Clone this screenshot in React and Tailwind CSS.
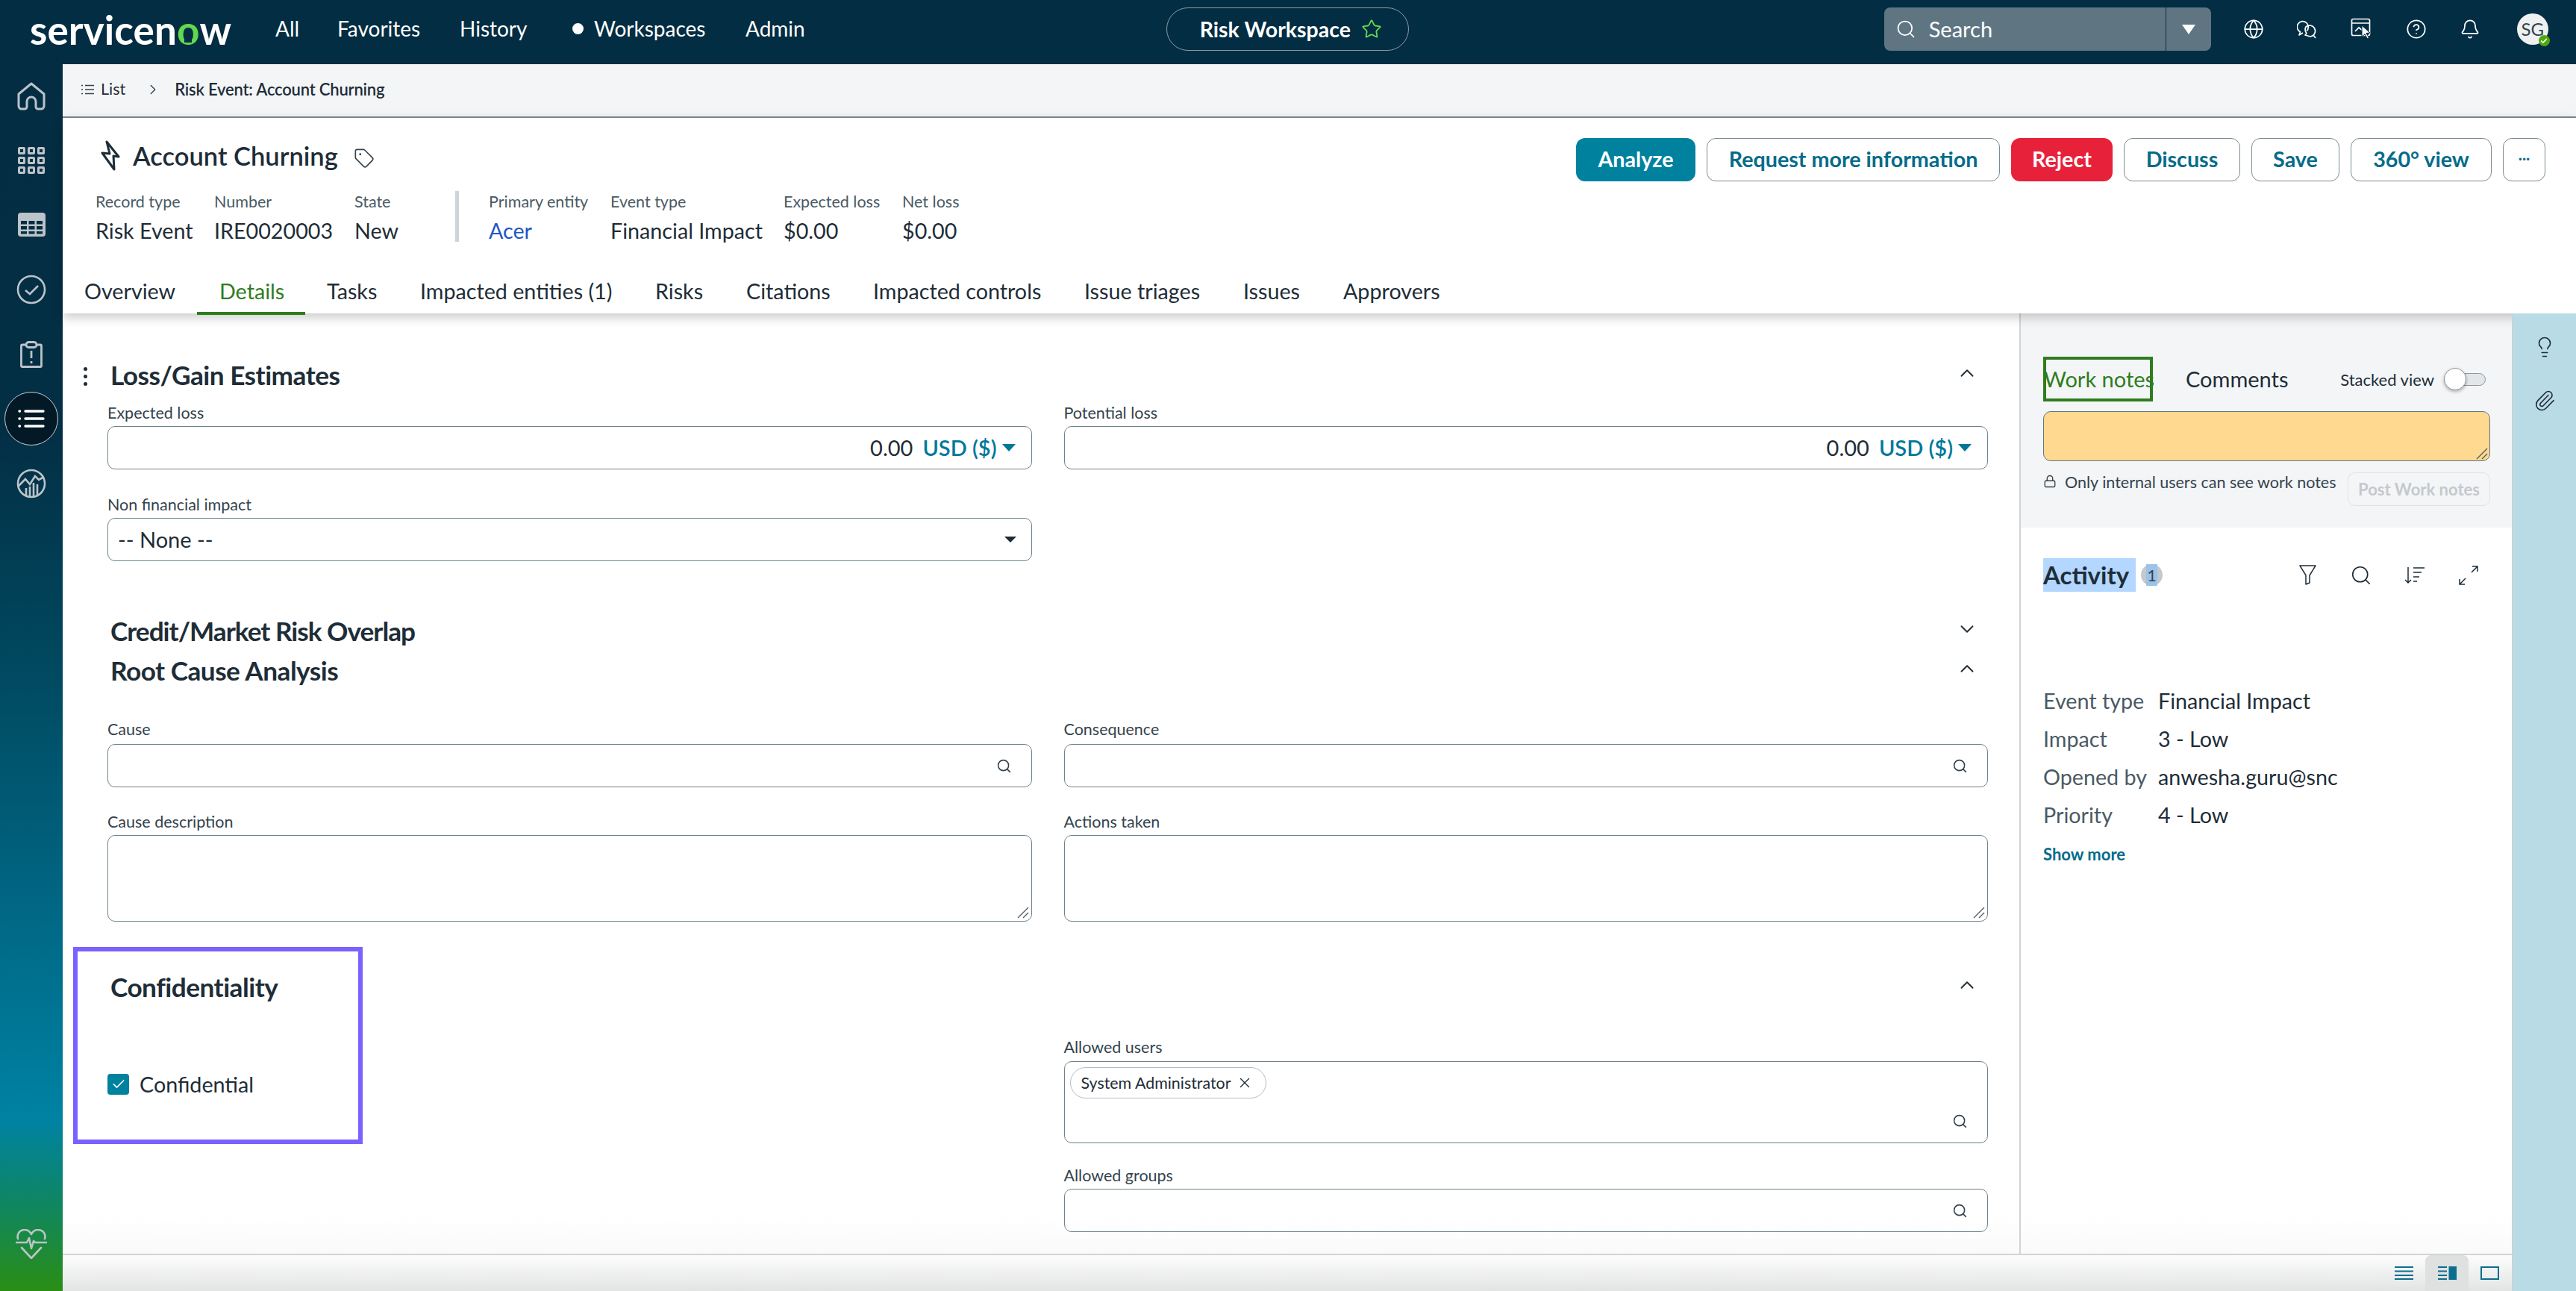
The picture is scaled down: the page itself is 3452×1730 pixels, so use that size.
import {
  Bell, ChevronDown, ChevronRight, ChevronUp, CircleHelp, Globe, Lightbulb, Lock, Paperclip,
  Search, Star, Tag, X, Check,
} from 'lucide-react'

const font = { fontFamily: '"Lato", "Noto Sans", sans-serif' }

function HomeIcon() {
  return (
    <svg width="40" height="38" viewBox="0 0 40 38" fill="none" stroke="#bcc3c9" strokeWidth="3" strokeLinejoin="round">
      <path d="M3 16 20 2l17 14v16a4 4 0 0 1-4 4h-4a3 3 0 0 1-3-3v-7a6 6 0 0 0-12 0v7a3 3 0 0 1-3 3H7a4 4 0 0 1-4-4Z" />
    </svg>
  )
}

function AppsIcon() {
  const cells = [0, 1, 2, 3, 4, 5, 6, 7, 8]
  return (
    <div className="grid w-[36px] grid-cols-3 gap-[3px]">
      {cells.map((c) => (
        <div key={c} className="h-[10px] rounded-[2px] border-[3px] border-[#bcc3c9]" />
      ))}
    </div>
  )
}

function TableIcon() {
  return (
    <svg width="37" height="32" viewBox="0 0 37 32">
      <rect width="37" height="32" rx="4" fill="#bcc3c9" />
      <g fill="#032d42">
        <rect x="4" y="11" width="8" height="4.5" /><rect x="14.5" y="11" width="8" height="4.5" /><rect x="25" y="11" width="8" height="4.5" />
        <rect x="4" y="18" width="8" height="4.5" /><rect x="14.5" y="18" width="8" height="4.5" /><rect x="25" y="18" width="8" height="4.5" />
        <rect x="4" y="25" width="8" height="3.5" /><rect x="14.5" y="25" width="8" height="3.5" /><rect x="25" y="25" width="8" height="3.5" />
      </g>
    </svg>
  )
}

function CheckCircleIcon() {
  return (
    <svg width="40" height="40" viewBox="0 0 40 40" fill="none" stroke="#bcc3c9" strokeWidth="2.6">
      <circle cx="20" cy="20" r="18" />
      <path d="m12 21 6 5 11-11" />
    </svg>
  )
}

function ClipboardIcon() {
  return (
    <svg width="30" height="36" viewBox="0 0 30 36" fill="none" stroke="#bcc3c9" strokeWidth="2.8" strokeLinejoin="round">
      <path d="M8 5H3a1.500 1.500 0 0 0-1.500 1.500V33A1.500 1.500 0 0 0 3 34.500h24a1.500 1.500 0 0 0 1.500-1.500V6.500A1.500 1.500 0 0 0 27 5h-5" />
      <rect x="8" y="1.500" width="14" height="7" rx="3.500" />
      <path d="M15 13v10M15 27v3" />
    </svg>
  )
}

function ListIcon() {
  return (
    <svg width="36" height="28" viewBox="0 0 36 28" fill="none" stroke="#fff" strokeWidth="3.400" strokeLinecap="round">
      <path d="M10 4h24M10 14h24M10 24h24" />
      <path d="M2 4h.500M2 14h.500M2 24h.500" />
    </svg>
  )
}

function ChartIcon() {
  return (
    <svg width="40" height="40" viewBox="0 0 40 40" fill="none" stroke="#bcc3c9" strokeWidth="2.600">
      <circle cx="20" cy="20" r="18" />
      <path d="M3 23 12 14l6 7 7-11 5 5 7-4" />
      <path d="M13 36V26M18 38V24M23 38V19M28 36V21" />
    </svg>
  )
}

function HeartIcon() {
  return (
    <svg width="42" height="40" viewBox="0 0 42 40" fill="none" stroke="#bcc3c9" strokeWidth="2.600" strokeLinecap="round" strokeLinejoin="round">
      <path d="M3 13C1 6 6 1 12 1c4 0 7 2 9 6 2-4 5-6 9-6 6 0 11 5 9 12" />
      <path d="M1 18h14l3-6 3 14 3-10 2 2h15" />
      <path d="m8 25 13 14 13-14" />
    </svg>
  )
}

function Bolt() {
  return (
    <svg width="27" height="42" viewBox="11 11 27 42" fill="none" stroke="#1e2d37" strokeWidth="3" strokeLinejoin="round">
      <path d="M19 13 35 33 28 32 29 50 13 28 23 29Z" />
    </svg>
  )
}

function SelectIcon() {
  return <div className="h-0 w-0 border-x-[9px] border-t-[10px] border-x-transparent border-t-[#00789a]" />
}

function ChatIcon() {
  return (
    <svg width="28" height="26" viewBox="0 0 28 26" fill="none" stroke="#fff" strokeWidth="1.700" strokeLinejoin="round">
      <path d="M13 15.500a7.500 7.500 0 1 0-8.500 1.300L3 21l5-3" />
      <path d="M12 10a7.500 7.500 0 1 1 6 13l-7-2 2-2.500A7.500 7.500 0 0 1 12 10Z" />
      <path d="m22 21 3 4" />
    </svg>
  )
}

function CursorIcon() {
  return (
    <svg width="30" height="30" viewBox="0 0 30 30" fill="none" stroke="#fff" strokeWidth="1.700">
      <rect x="1.500" y="1.500" width="24" height="22" rx="2" />
      <path d="M1.500 7h24M6 18l5-5 5 4" />
      <path d="m15 10 11 10-5 .5 3.500 6-2.200 1.300-3.300-6-4 3.500Z" fill="#fff" stroke="#032d42" strokeWidth="1" />
    </svg>
  )
}

function FilterIcon() {
  return (
    <svg width="23" height="27" viewBox="0 0 23 27" fill="none" stroke="#1e2d37" strokeWidth="1.500" strokeLinejoin="round">
      <path d="M1 1h21l-8 13v10l-5 2V14Z" />
    </svg>
  )
}

function SortIcon() {
  return (
    <svg width="28" height="24" viewBox="0 0 28 24" fill="none" stroke="#1e2d37" strokeWidth="1.500">
      <path d="M5 1v21M1 18l4 4 4-4" />
      <path d="M12 2h15M12 8h11M12 14h8M12 20h5" />
    </svg>
  )
}

function ExpandIcon() {
  return (
    <svg width="28" height="28" viewBox="0 0 28 28" fill="none" stroke="#1e2d37" strokeWidth="1.500">
      <path d="m18 10 8-8M19 2h7v7" />
      <path d="m10 18-8 8M2 19v7h7" />
    </svg>
  )
}

function Label({ children, className = '' }) {
  return <div className={`h-[26px] text-[21.5px] leading-[26px] text-[#33434d] ${className}`}>{children}</div>
}

function Heading({ children, open = true, className = '' }) {
  return (
    <div className={`flex h-[40px] items-center justify-between pl-[4px] pr-[13px] ${className}`}>
      <h2 className="text-[35.200px] font-bold leading-[40px] tracking-[-0.5px] text-[#1e2d37]">{children}</h2>
      {open
        ? <ChevronUp size={30} strokeWidth={1.500} className="mt-[-5px] text-[#1e2d37]" />
        : <ChevronDown size={30} strokeWidth={1.500} className="mt-[-5px] text-[#1e2d37]" />}
    </div>
  )
}

function SearchBox() {
  return (
    <div className="flex h-[58px] items-center justify-end rounded-[10px] border-[1.500px] border-[#6f818b] pr-[26px]">
      <Search size={21} strokeWidth={1.800} className="text-[#33434d]" />
    </div>
  )
}

function TextBox() {
  return (
    <div className="relative h-[116px] rounded-[10px] border-[1.500px] border-[#6f818b]">
      <svg width="16" height="16" viewBox="0 0 16 16" className="absolute bottom-[3px] right-[3px]" stroke="#4b5b65" strokeWidth="1.300">
        <path d="M15 1 1 15M15 8l-7 7" />
      </svg>
    </div>
  )
}

function MoneyBox() {
  return (
    <div className="flex h-[58px] items-center justify-end rounded-[10px] border-[1.500px] border-[#6f818b] pr-[21px] text-[29px]">
      <span className="text-[#1e2d37]">0.00</span>
      <span className="ml-[13px] font-semibold text-[#00789a]">USD ($)</span>
      <div className="ml-[7px]"><SelectIcon /></div>
    </div>
  )
}

function OutlineButton({ children, className = '' }) {
  return (
    <button className={`flex h-[58px] items-center justify-center rounded-[12px] border-[1.500px] border-[#7b8a93] bg-white text-[28.700px] font-bold text-[#046b8a] ${className}`}>
      {children}
    </button>
  )
}

function Meta({ label, value, link = false, className = '' }) {
  return (
    <div className={className}>
      <div className="h-[28px] text-[21.500px] leading-[28px] text-[#4a5a64]">{label}</div>
      <div className={`mt-[7px] h-[36px] whitespace-nowrap text-[28.700px] leading-[36px] ${link ? 'text-[#1e56c4]' : 'text-[#1e2d37]'}`}>{value}</div>
    </div>
  )
}

const tabs = [
  ['Overview', 'w-[181px]'],
  ['Details', 'w-[144px]'],
  ['Tasks', 'w-[125px]'],
  ['Impacted entities (1)', 'w-[315px]'],
  ['Risks', 'w-[122px]'],
  ['Citations', 'w-[170px]'],
  ['Impacted controls', 'w-[283px]'],
  ['Issue triages', 'w-[213px]'],
  ['Issues', 'w-[134px]'],
  ['Approvers', 'w-[130px]'],
]

const activity = [
  ['Event type', 'Financial Impact'],
  ['Impact', '3 - Low'],
  ['Opened by', 'anwesha.guru@snc'],
  ['Priority', '4 - Low'],
]

export default function App() {
  return (
    <div style={font} className="flex h-[1730px] w-[3452px] flex-col overflow-hidden bg-white">
      {/* top bar */}
      <header className="flex h-[86px] shrink-0 items-center bg-[#032d42] pb-[8px] text-white">
        <div className="ml-[40px] w-[329px] whitespace-nowrap text-[53px] font-bold leading-none tracking-[0.1px]">
          servicen
          <span className="relative inline-block text-[#62d84e]">
            o
            <span className="absolute bottom-[9px] left-1/2 h-[9px] w-[10px] -translate-x-1/2 rounded-t-full bg-[#032d42]" />
          </span>
          w
        </div>
        <nav className="mb-[2px] flex items-center text-[28px]">
          <span className="w-[83px]">All</span>
          <span className="w-[164px]">Favorites</span>
          <span className="w-[151px]">History</span>
          <span className="mr-[14px] h-[15px] w-[15px] rounded-full bg-white" />
          <span className="w-[203px]">Workspaces</span>
          <span>Admin</span>
        </nav>
        <div className="ml-[484px] flex h-[58px] w-[325px] items-center rounded-full border-[1.500px] border-[#8c9ca5] pl-[44px]">
          <span className="text-[28.500px] font-bold">Risk Workspace</span>
          <Star size={28} strokeWidth={1.600} className="ml-[14px] text-[#62d84e]" />
        </div>
        <div className="ml-[637px] flex h-[58px] w-[438px] items-center rounded-[8px] bg-[#5f7682]">
          <Search size={28} strokeWidth={1.500} className="ml-[15px]" />
          <span className="ml-[17px] flex-1 text-[29px]">Search</span>
          <div className="flex h-full w-[61px] items-center justify-center border-l-[1.500px] border-[#032d42]">
            <div className="h-0 w-0 border-x-[9px] border-t-[13px] border-x-transparent border-t-white" />
          </div>
        </div>
        <div className="ml-[43px] flex items-center gap-[44px]">
          <Globe size={28} strokeWidth={1.500} />
          <ChatIcon />
          <CursorIcon />
          <CircleHelp size={28} strokeWidth={1.500} />
          <Bell size={28} strokeWidth={1.500} />
        </div>
        <div className="relative ml-[49px] flex h-[42px] w-[42px] items-center justify-center rounded-full bg-[#eef0f1] text-[24px] text-[#33434d]">
          SG
          <div className="absolute bottom-[-2px] right-[-2px] flex h-[15px] w-[15px] items-center justify-center rounded-full bg-[#4fa80f]">
            <Check size={10} strokeWidth={4} className="text-white" />
          </div>
        </div>
      </header>

      <div className="flex min-h-0 flex-1">
        {/* left rail */}
        <aside className="flex w-[84px] shrink-0 flex-col items-center bg-[linear-gradient(180deg,#032d42_0%,#032f45_30%,#004a61_50%,#006c8a_72%,#0082a3_86%,#0f8660_93%,#2a8e14_100%)]">
          <div className="flex h-[85px] items-center justify-center"><HomeIcon /></div>
          <div className="flex h-[87px] items-center justify-center"><AppsIcon /></div>
          <div className="flex h-[86px] items-center justify-center"><TableIcon /></div>
          <div className="flex h-[87px] items-center justify-center"><CheckCircleIcon /></div>
          <div className="flex h-[87px] items-center justify-center"><ClipboardIcon /></div>
          <div className="flex h-[86px] items-center justify-center">
            <div className="flex h-[72px] w-[72px] items-center justify-center rounded-full border-[1.500px] border-[#c7d0d5] bg-[#031a26]">
              <ListIcon />
            </div>
          </div>
          <div className="flex h-[87px] items-center justify-center"><ChartIcon /></div>
          <div className="mb-[43px] mt-auto"><HeartIcon /></div>
        </aside>

        <main className="flex min-w-0 flex-1 flex-col">
          {/* breadcrumb */}
          <div className="flex h-[72px] shrink-0 items-center border-b-2 border-[#7d8a93] bg-[#f4f5f7] pb-[3px] pl-[25px] text-[#1e2d37]">
            <svg width="17" height="14" viewBox="0 0 17 14" stroke="#33434d" strokeWidth="1.600" fill="none">
              <path d="M5 1.500h12M5 7h12M5 12.500h12M0 1.500h2M0 7h2M0 12.500h2" />
            </svg>
            <span className="ml-[9px] text-[21.500px]">List</span>
            <ChevronRight size={22} strokeWidth={1.500} className="ml-[26px] text-[#33434d]" />
            <span className="ml-[18px] text-[22px] font-semibold tracking-[-0.2px]">Risk Event: Account Churning</span>
          </div>

          {/* record header */}
          <div className="relative z-10 h-[262px] shrink-0 bg-white shadow-[0_5px_14px_rgba(0,0,0,0.22)]">
            <div className="flex h-[98px] items-start justify-between pr-[41px] pt-[27px]">
              <div className="flex items-center pl-[51px] pt-[2px]">
                <Bolt />
                <h1 className="ml-[16px] text-[34.500px] font-semibold leading-[44px] text-[#1e2d37]">Account Churning</h1>
                <Tag size={28} strokeWidth={1.400} className="ml-[21px] mt-[6px] text-[#33434d]" />
              </div>
              <div className="flex gap-[15px]">
                <button className="h-[58px] w-[160px] rounded-[12px] bg-[#00829f] text-[28.700px] font-bold text-white">Analyze</button>
                <OutlineButton className="w-[393px]">Request more information</OutlineButton>
                <button className="h-[58px] w-[136px] rounded-[12px] bg-[#e8213a] text-[28.700px] font-bold text-white">Reject</button>
                <OutlineButton className="w-[156px]">Discuss</OutlineButton>
                <OutlineButton className="w-[118px]">Save</OutlineButton>
                <OutlineButton className="w-[189px]">360° view</OutlineButton>
                <OutlineButton className="w-[57px]">
                  <span className="mt-[-14px] text-[22px] leading-none">...</span>
                </OutlineButton>
              </div>
            </div>
            <div className="flex h-[70px] pl-[44px]">
              <Meta label="Record type" value="Risk Event" className="w-[159px]" />
              <Meta label="Number" value="IRE0020003" className="w-[188px]" />
              <Meta label="State" value="New" className="w-[135px]" />
              <div className="h-[68px] w-[5px] bg-[#cdd3d7]" />
              <Meta label="Primary entity" value="Acer" link className="ml-[40px] w-[163px]" />
              <Meta label="Event type" value="Financial Impact" className="w-[232px]" />
              <Meta label="Expected loss" value="$0.00" className="w-[159px]" />
              <Meta label="Net loss" value="$0.00" />
            </div>
            <div className="mt-[36px] flex h-[58px] items-stretch pl-[29px]">
              {tabs.map(([name, width]) => (
                <div key={name} className={`relative flex items-center whitespace-nowrap text-[28.700px] ${width} ${name === 'Details' ? 'text-[#2e7d1e]' : 'text-[#1e2d37]'}`}>
                  {name}
                  {name === 'Details' && <div className="absolute bottom-[-2px] left-[-30px] h-[4px] w-[145px] bg-[#2e7d1e]" />}
                </div>
              ))}
            </div>
          </div>

          <div className="flex min-h-0 flex-1">
            <div className="flex min-w-0 flex-1 flex-col">
              <div className="flex min-h-0 flex-1 bg-[linear-gradient(180deg,#fff_96%,#fafafa_100%)]">
                {/* form */}
                <section className="relative w-[2624px] shrink-0 border-r-2 border-[#cfd4d8] pl-[60px] pr-[42px] pt-[62px]">
                  <div className="absolute left-[28px] top-[72px] flex flex-col gap-[5px]">
                    <div className="h-[5px] w-[5px] rounded-full bg-[#1e2d37]" />
                    <div className="h-[5px] w-[5px] rounded-full bg-[#1e2d37]" />
                    <div className="h-[5px] w-[5px] rounded-full bg-[#1e2d37]" />
                  </div>
                  <Heading>Loss/Gain Estimates</Heading>
                  <div className="mt-[18px] grid grid-cols-2 gap-x-[43px]">
                    <div>
                      <Label className="mb-[5px]">Expected loss</Label>
                      <MoneyBox />
                    </div>
                    <div>
                      <Label className="mb-[5px]">Potential loss</Label>
                      <MoneyBox />
                    </div>
                  </div>
                  <div className="mt-[34px] grid grid-cols-2 gap-x-[43px]">
                    <div>
                      <Label className="mb-[5px]">Non financial impact</Label>
                      <div className="flex h-[58px] items-center justify-between rounded-[10px] border-[1.500px] border-[#6f818b] pl-[13px] pr-[20px] text-[29px] text-[#1e2d37]">
                        -- None --
                        <div className="h-0 w-0 border-x-[8px] border-t-[8px] border-x-transparent border-t-[#1e2d37]" />
                      </div>
                    </div>
                  </div>
                  <Heading open={false} className="mt-[73px]">
                    <span className="tracking-[-1px]">Credit/Market Risk Overlap</span>
                  </Heading>
                  <Heading className="mt-[13px]">Root Cause Analysis</Heading>
                  <div className="mt-[46px] grid grid-cols-2 gap-x-[43px]">
                    <div>
                      <Label className="mb-[7px]">Cause</Label>
                      <SearchBox />
                    </div>
                    <div>
                      <Label className="mb-[7px]">Consequence</Label>
                      <SearchBox />
                    </div>
                  </div>
                  <div className="mt-[33px] grid grid-cols-2 gap-x-[43px]">
                    <div>
                      <Label className="mb-[5px]">Cause description</Label>
                      <TextBox />
                    </div>
                    <div>
                      <Label className="mb-[5px]">Actions taken</Label>
                      <TextBox />
                    </div>
                  </div>
                  <div className="relative mt-[67px]">
                    <Heading>Confidentiality</Heading>
                    <div className="pointer-events-none absolute left-[-46px] top-[-33px] h-[264px] w-[388px] border-[6px] border-[#7b61ff]" />
                    <div className="mt-[48px] grid grid-cols-2 gap-x-[43px]">
                      <div className="flex items-start pt-[49px]">
                        <div className="flex h-[28px] w-[29px] items-center justify-center rounded-[4px] bg-[#00829f]">
                          <Check size={20} strokeWidth={2} className="text-white" />
                        </div>
                        <span className="ml-[14px] text-[28.700px] leading-[28px] text-[#1e2d37]">Confidential</span>
                      </div>
                      <div>
                        <Label className="mb-[6px]">Allowed users</Label>
                        <div className="relative h-[110px] rounded-[10px] border-[1.500px] border-[#6f818b] pl-[7px] pt-[7px]">
                          <div className="flex h-[42px] w-[263px] items-center rounded-full border-[1.500px] border-[#b5bdc2] pl-[14px] text-[21.400px] text-[#1e2d37]">
                            System Administrator
                            <X size={22} strokeWidth={1.500} className="ml-[7px]" />
                          </div>
                          <Search size={21} strokeWidth={1.800} className="absolute bottom-[18px] right-[26px] text-[#33434d]" />
                        </div>
                        <Label className="mb-[5px] mt-[30px]">Allowed groups</Label>
                        <SearchBox />
                      </div>
                    </div>
                  </div>
                </section>

                {/* activity panel */}
                <section className="flex min-w-0 flex-1 flex-col">
                  <div className="h-[287px] bg-[#f4f5f7] pl-[30px] pr-[29px] pt-[58px]">
                    <div className="flex h-[60px] items-center">
                      <div className="flex h-[60px] w-[147px] items-center whitespace-nowrap border-[4px] border-[#2e7d1e] text-[29px] text-[#2e7d1e]">
                        <span className="ml-[-3px]">Work notes</span>
                      </div>
                      <span className="ml-[44px] text-[29px] text-[#1e2d37]">Comments</span>
                      <span className="ml-auto text-[22px] text-[#1e2d37]">Stacked view</span>
                      <div className="relative ml-[13px] mr-[6px] h-[17px] w-[56px] rounded-full border-[1.500px] border-[#8d999f] bg-[#e3e6e8]">
                        <div className="absolute left-[-1px] top-[-8px] h-[30px] w-[30px] rounded-full border border-[#8d999f] bg-white shadow-[0_2px_4px_rgba(0,0,0,0.3)]" />
                      </div>
                    </div>
                    <div className="relative mt-[13px] h-[67px] rounded-[10px] border-[1.500px] border-[#5f7682] bg-[#ffd98f]">
                      <svg width="16" height="16" viewBox="0 0 16 16" className="absolute bottom-[1px] right-[2px]" stroke="#4b5b65" strokeWidth="1.300">
                        <path d="M15 1 1 15M15 8l-7 7" />
                      </svg>
                    </div>
                    <div className="mt-[15px] flex items-start">
                      <Lock size={18} strokeWidth={1.800} className="mt-[3px] text-[#33434d]" />
                      <span className="ml-[11px] text-[21.500px] leading-[26px] text-[#33434d]">Only internal users can see work notes</span>
                      <div className="ml-auto flex h-[45px] w-[191px] items-center justify-center rounded-[10px] border-[1.500px] border-[#dfe2e4] text-[22px] font-bold text-[#c5c9cc]">
                        Post Work notes
                      </div>
                    </div>
                  </div>
                  <div className="pl-[30px] pr-[22px] pt-[41px]">
                    <div className="flex h-[45px] items-center">
                      <span className="flex h-[45px] w-[124px] items-center bg-[#b3d7ff] text-[33px] font-bold text-[#1e2d37]">Activity</span>
                      <div className="relative ml-[7px] flex h-[29px] w-[29px] items-center justify-center rounded-full bg-[#c3c9cc] text-[21px] text-[#33434d]">
                        <span className="bg-[#9cc2e8] px-[1px] leading-[29px]">1</span>
                      </div>
                      <div className="ml-auto flex items-center">
                        <div className="flex w-[72px] justify-center"><FilterIcon /></div>
                        <div className="flex w-[72px] justify-center"><Search size={30} strokeWidth={1.300} className="text-[#1e2d37]" /></div>
                        <div className="flex w-[72px] justify-center"><SortIcon /></div>
                        <div className="flex w-[72px] justify-center"><ExpandIcon /></div>
                      </div>
                    </div>
                    <div className="mt-[121px]">
                      {activity.map(([key, val]) => (
                        <div key={key} className="flex h-[51px] items-center text-[28.700px]">
                          <span className="w-[154px] text-[#4a5a64]">{key}</span>
                          <span className="text-[#1e2d37]">{val}</span>
                        </div>
                      ))}
                    </div>
                    <div className="mt-[10px] text-[22px] font-bold text-[#046b8a]">Show more</div>
                  </div>
                </section>
              </div>

              {/* footer */}
              <footer className="flex h-[50px] shrink-0 items-stretch justify-end border-t-2 border-[#d2d4d5] bg-[linear-gradient(180deg,#fdfdfd,#e2e3e3)] pr-[17px]">
                <div className="flex items-center justify-center pr-[16px]">
                  <svg width="25" height="18" viewBox="0 0 25 18" stroke="#0b6e8e" strokeWidth="2.200"><path d="M0 1h25M0 6.500h25M0 12h25M0 17h25" /></svg>
                </div>
                <div className="flex w-[58px] items-center justify-center rounded-t-[8px] bg-[#dfe0e0]">
                  <svg width="25" height="18" viewBox="0 0 25 18">
                    <path d="M0 1h12M0 6.500h12M0 12h12M0 17h12" stroke="#0b6e8e" strokeWidth="2.200" />
                    <rect x="14.500" width="10.500" height="18" fill="#0b6e8e" />
                  </svg>
                </div>
                <div className="flex items-center justify-center pl-[16px]">
                  <svg width="25" height="18" viewBox="0 0 25 18" fill="none" stroke="#0b6e8e" strokeWidth="2"><rect x="1" y="1" width="23" height="16" /></svg>
                </div>
              </footer>
            </div>

            {/* right rail */}
            <aside className="relative z-20 flex w-[86px] shrink-0 flex-col items-center border-l-2 border-[#c6d4da] bg-[#b9dbe6] pt-[30px]">
              <Lightbulb size={30} strokeWidth={1.300} className="text-[#1e2d37]" />
              <Paperclip size={30} strokeWidth={1.300} className="mt-[42px] text-[#1e2d37]" />
            </aside>
          </div>
        </main>
      </div>
    </div>
  )
}
